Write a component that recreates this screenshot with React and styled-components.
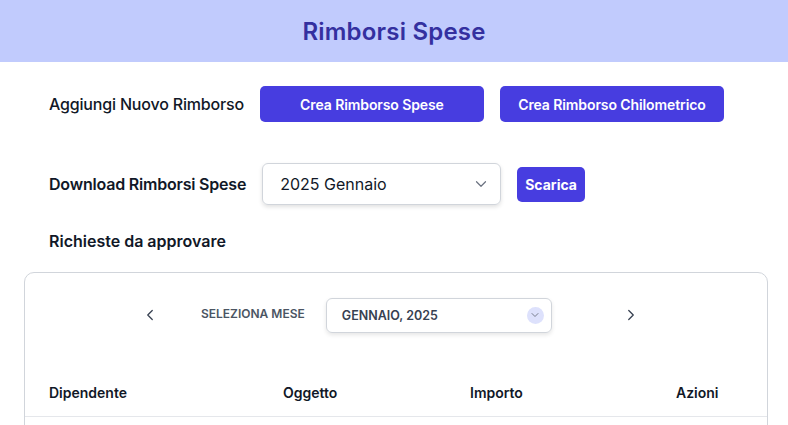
import React from 'react';
import styled, { createGlobalStyle } from 'styled-components';

const GlobalStyle = createGlobalStyle`
  body {
    margin: 0;
    font-family: Inter, "Noto Sans", sans-serif;
    color: #111827;
    background: #ffffff;
  }
  * { box-sizing: border-box; }
`;

const Chevron = ({ dir = 'down', size = 16, color = '#374151', width = 2 }) => {
  const d = {
    down: 'M6 9l6 6 6-6',
    left: 'M15 6l-6 6 6 6',
    right: 'M9 6l6 6-6 6',
  }[dir];
  return (
    <svg width={size} height={size} viewBox="0 0 24 24" fill="none" stroke={color} strokeWidth={width} strokeLinecap="round" strokeLinejoin="round">
      <path d={d} />
    </svg>
  );
};

const App = () => {
  return (
    <>
      <GlobalStyle />
      <Header>
        <h1>Rimborsi Spese</h1>
      </Header>
      <Main>
        <Row $mt={24}>
          <Label $weight={500} $ls={-0.18}>Aggiungi Nuovo Rimborso</Label>
          <PrimaryButton $w={224}>Crea Rimborso Spese</PrimaryButton>
          <PrimaryButton $w={224}>Crea Rimborso Chilometrico</PrimaryButton>
        </Row>
        <Row $mt={41}>
          <Label $weight={600} $ls={-0.2}>Download Rimborsi Spese</Label>
          <Select>
            <span>2025 Gennaio</span>
            <Chevron dir="down" size={18} color="#6b7280" width={1.6} />
          </Select>
          <SmallButton>Scarica</SmallButton>
        </Row>
        <Section>Richieste da approvare</Section>
      </Main>
      <Card>
        <MonthBar>
          <NavButton><Chevron dir="left" size={18} color="#374151" width={1.7} /></NavButton>
          <MonthLabel>Seleziona mese</MonthLabel>
          <MonthSelect>
            <span>Gennaio, 2025</span>
            <Bubble><Chevron dir="down" size={12} color="#6b7280" width={1.8} /></Bubble>
          </MonthSelect>
          <NavButton $ml={70}><Chevron dir="right" size={18} color="#374151" width={1.7} /></NavButton>
        </MonthBar>
        <TableHead>
          <Th>Dipendente</Th>
          <Th>Oggetto</Th>
          <Th>Importo</Th>
          <Th>Azioni</Th>
        </TableHead>
        <TableBody />
      </Card>
    </>
  );
};

const Header = styled.header`
  height: 62px;
  background: #c1cbfd;
  display: flex;
  align-items: center;
  justify-content: center;

  h1 {
    margin: 0;
    font-size: 24px;
    font-weight: 600;
    color: #3430a0;
    letter-spacing: 0.2px;
  }
`;

const Main = styled.main`
  padding: 0 49px;
`;

const Row = styled.div`
  display: flex;
  align-items: center;
  gap: 16px;
  margin-top: ${(p) => p.$mt}px;
`;

const Label = styled.span`
  font-size: 16px;
  font-weight: ${(p) => p.$weight};
  color: #111827;
  letter-spacing: ${(p) => p.$ls || 0}px;
`;

const PrimaryButton = styled.button`
  width: ${(p) => p.$w}px;
  height: 36px;
  border: none;
  border-radius: 5px;
  background: #473de0;
  color: #ffffff;
  font-family: inherit;
  font-size: 14px;
  font-weight: 600;
  letter-spacing: -0.1px;
`;

const Select = styled.div`
  width: 239px;
  height: 42px;
  border: 1px solid #d1d5db;
  border-radius: 6px;
  box-shadow: 0 2px 4px rgba(0, 0, 0, 0.12);
  display: flex;
  align-items: center;
  justify-content: space-between;
  padding: 0 10px 0 17px;
  font-size: 16px;
  color: #111827;
`;

const SmallButton = styled.button`
  height: 35px;
  padding: 0 8px;
  border: none;
  border-radius: 5px;
  background: #473de0;
  color: #ffffff;
  font-family: inherit;
  font-size: 14px;
  font-weight: 700;
`;

const Section = styled.h2`
  margin: 26px 0 0;
  font-size: 16px;
  font-weight: 600;
  color: #111827;
`;

const Card = styled.section`
  margin: 21px 20px 0 24px;
  border: 1px solid #d1d5db;
  border-radius: 10px;
  padding-top: 24px;
`;

const MonthBar = styled.div`
  display: flex;
  align-items: center;
  padding-left: 116px;
  height: 36px;
`;

const NavButton = styled.span`
  display: flex;
  width: 18px;
  margin-left: ${(p) => p.$ml || 0}px;
`;

const MonthLabel = styled.span`
  margin-left: 42px;
  font-size: 12px;
  font-weight: 600;
  text-transform: uppercase;
  color: #4b5563;
  margin-bottom: 4px;
`;

const MonthSelect = styled.div`
  margin-left: 21px;
  width: 226px;
  height: 35px;
  border: 1px solid #d1d5db;
  border-radius: 6px;
  box-shadow: 0 2px 4px rgba(0, 0, 0, 0.1);
  display: flex;
  align-items: center;
  justify-content: space-between;
  padding: 0 7px 0 15px;
  font-size: 12.5px;
  font-weight: 600;
  text-transform: uppercase;
  color: #374151;
`;

const Bubble = styled.span`
  width: 17px;
  height: 17px;
  border-radius: 50%;
  background: #dde1fc;
  display: flex;
  align-items: center;
  justify-content: center;
`;

const TableHead = styled.div`
  display: grid;
  grid-template-columns: 234px 187px 206px 1fr;
  padding: 0 24px 13px;
  margin-top: 50px;
  align-items: center;
  border-bottom: 1px solid #e5e7eb;
  line-height: 20px;
`;

const Th = styled.span`
  font-size: 14px;
  font-weight: 600;
  color: #111827;
`;

const TableBody = styled.div`
  height: 20px;
`;

export default App;
